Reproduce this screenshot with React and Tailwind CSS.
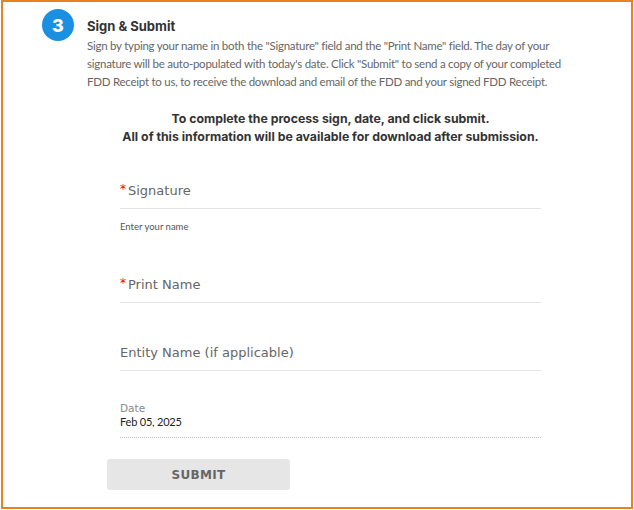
import React from "react";

const Field = ({ label, required, hint, className = "" }) => (
  <div className={className}>
    <div className="flex items-center h-[28px] pb-[8px] border-b border-[#e4e4e4]">
      {required && (
        <span className="text-[#e00] text-[12px] leading-none mr-[2px] -mt-[4px] font-['DejaVu_Sans',sans-serif]">*</span>
      )}
      <span className="text-[13px] text-[#666] leading-[20px] font-['DejaVu_Sans',Inter,sans-serif]">{label}</span>
    </div>
    {hint && (
      <div className="text-[9.5px] text-[#555] mt-[12px] leading-[12px] font-['Lato','Noto_Sans',sans-serif]">
        {hint}
      </div>
    )}
  </div>
);

export default function App() {
  return (
    <div className="w-[632px] h-[509px] ml-px border-2 border-[#e8821e] bg-white">
      {/* STEP HEADER */}
      <div className="flex items-start pt-[7px] pl-[39px]">
        <div className="w-[32px] h-[32px] rounded-full bg-[#1b8fe2] flex items-center justify-center text-white text-[18px] font-extrabold shrink-0 font-['Inter',sans-serif]">
          3
        </div>
        <div className="ml-[13px] pt-[9px]">
          <h2 className="text-[13px] font-bold text-[#333] leading-[16px] font-['Inter',sans-serif]">
            Sign &amp; Submit
          </h2>
          <p className="text-[11.5px] tracking-[-0.25px] text-[#666] leading-[18px] mt-[3px] font-['Lato','Noto_Sans',sans-serif]">
            Sign by typing your name in both the "Signature" field and the "Print Name" field. The day of your
            <br />
            signature will be auto-populated with today's date. Click "Submit" to send a copy of your completed
            <br />
            FDD Receipt to us, to receive the download and email of the FDD and your signed FDD Receipt.
          </p>
        </div>
      </div>

      {/* NOTICE */}
      <div className="text-center text-[12.3px] font-bold text-[#333] leading-[18px] mt-[19px] pl-[27px] font-['Inter',sans-serif]">
        To complete the process sign, date, and click submit.
        <br />
        All of this information will be available for download after submission.
      </div>

      {/* FORM */}
      <div className="ml-[117px] w-[421px] mt-[35px]">
        <Field label="Signature" required hint="Enter your name" />
        <Field label="Print Name" required className="mt-[42px]" />
        <Field label="Entity Name (if applicable)" className="mt-[40px]" />

        <div className="mt-[31px] border-b border-dotted border-[#bbb] pb-[8px]">
          <div className="text-[10.5px] text-[#888] leading-[13px] font-['DejaVu_Sans',sans-serif]">Date</div>
          <div className="text-[11px] tracking-[-0.2px] text-[#222] leading-[14px] font-['Lato','Noto_Sans',sans-serif]">
            Feb 05, 2025
          </div>
        </div>
      </div>

      <div className="pl-[104px] mt-[21px]">
        <button className="w-[183px] h-[31px] rounded-[3px] bg-[#e6e6e6] text-[#666] text-[12px] font-bold tracking-wide font-['DejaVu_Sans',sans-serif]">
          SUBMIT
        </button>
      </div>
    </div>
  );
}
